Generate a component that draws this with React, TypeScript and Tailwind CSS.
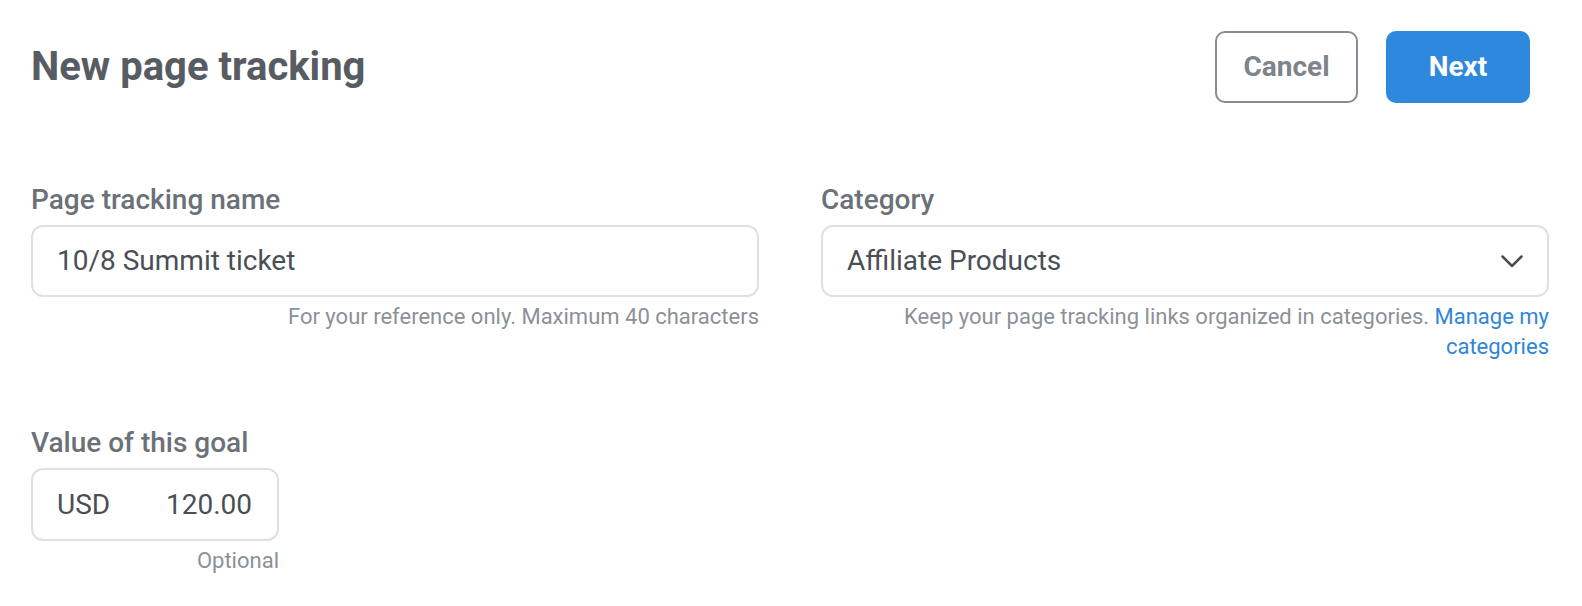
import React from 'react'

const font = { fontFamily: 'Roboto, "Noto Sans", sans-serif' }

function Label({ children }: { children: React.ReactNode }) {
  return (
    <div className="text-[28px] leading-[32px] font-medium text-[#6b7178] mb-[9px]">
      {children}
    </div>
  )
}

function Helper({ children }: { children: React.ReactNode }) {
  return (
    <div className="mt-[5px] text-right text-[22px] leading-[30px] text-[#8b9198]">
      {children}
    </div>
  )
}

export default function App() {
  return (
    <div className="min-h-screen bg-white" style={font}>
      {/* Header */}
      <div className="flex items-center justify-between pl-[31px] pr-[52px] pt-[31px]">
        <h1 className="text-[40px] leading-[44px] font-bold text-[#575c63]">New page tracking</h1>
        <div className="flex items-center gap-[28px]">
          <button className="w-[143px] h-[72px] rounded-[10px] border-2 border-[#878d94] bg-white text-[28px] font-bold text-[#7d848b]">
            Cancel
          </button>
          <button className="w-[144px] h-[72px] rounded-[10px] bg-[#2e88dc] text-[28px] font-bold text-white">
            Next
          </button>
        </div>
      </div>

      <div className="pl-[31px] pr-[33px] pt-[81px]">
        <div className="grid grid-cols-2 gap-x-[62px]">
          <div>
            <Label>Page tracking name</Label>
            <div className="h-[72px] rounded-[12px] border-2 border-[#e0e0e0] flex items-center px-[24px] text-[28px] text-[#4a4f56]">
              10/8 Summit ticket
            </div>
            <Helper>For your reference only. Maximum 40 characters</Helper>
          </div>
          <div>
            <Label>Category</Label>
            <div className="h-[72px] rounded-[12px] border-2 border-[#e0e0e0] flex items-center justify-between pl-[24px] pr-[24px] text-[28px] text-[#4a4f56]">
              <span>Affiliate Products</span>
              <svg width="22" height="13" viewBox="0 0 22 13" fill="none">
                <path d="M1.5 1.5 L11 11 L20.5 1.5" stroke="#4a4f56" strokeWidth="2.5" strokeLinecap="round" strokeLinejoin="round" />
              </svg>
            </div>
            <Helper>
              Keep your page tracking links organized in categories.{' '}
              <a className="text-[#2f86d9]">Manage my categories</a>
            </Helper>
          </div>
        </div>

        <div className="mt-[65px] w-[248px]">
          <Label>Value of this goal</Label>
          <div className="h-[73px] rounded-[12px] border-2 border-[#e0e0e0] flex items-center justify-between pl-[24px] pr-[25px] text-[28px] text-[#4a4f56]">
            <span>USD</span>
            <span>120.00</span>
          </div>
          <Helper>Optional</Helper>
        </div>
      </div>
    </div>
  )
}
